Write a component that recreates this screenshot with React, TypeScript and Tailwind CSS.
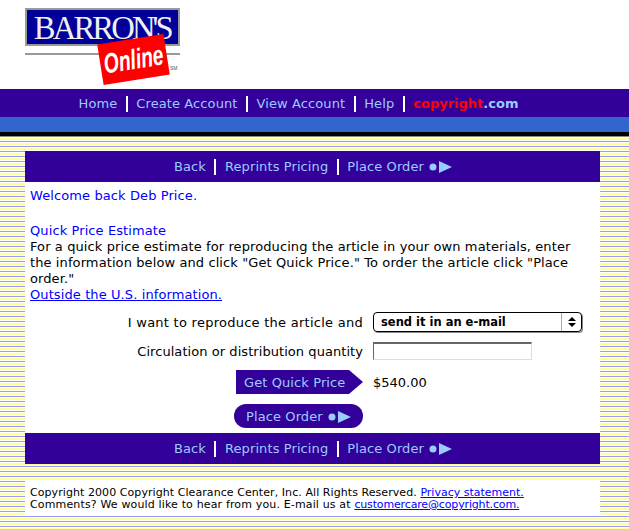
const font = "font-['DejaVu_Sans',Verdana,sans-serif]";
const navText = "text-[13px] font-medium tracking-[0.1px] text-[#99ccff]";

function Sep() {
  return <span className="mx-[8.5px] inline-block h-[16px] w-[2px] bg-white" />;
}

function Arrow() {
  return (
    <svg width="23" height="12" viewBox="0 0 23 12" className="ml-[5px]">
      <circle cx="4" cy="6" r="3.5" fill="#99ccff" />
      <path d="M10 0 L23 6 L10 12 Z" fill="#99ccff" />
    </svg>
  );
}

function SubNav() {
  return (
    <div className={`flex h-[31px] items-center justify-center bg-[#330099] pl-[1px] ${navText}`}>
      <span>Back</span>
      <Sep />
      <span>Reprints Pricing</span>
      <Sep />
      <span>Place Order</span>
      <Arrow />
    </div>
  );
}

function Logo() {
  return (
    <div className="relative h-[85px] w-[180px]">
      <div className="absolute left-[25px] top-[8px] flex h-[38px] w-[155px] items-center justify-center overflow-hidden border-2 border-[#999999] bg-[#000099]">
        <span className="inline-block origin-center scale-x-[0.96] pt-[2px] font-['Liberation_Serif',serif] text-[34px] leading-none tracking-[-3px] whitespace-nowrap text-[#f0f0f0]">
          BARRON'S
        </span>
      </div>
      <div className="absolute left-[25px] top-[53px] h-[2px] w-[155px] bg-[#999999]" />
      <div className="absolute left-[100px] top-[39px] flex h-[41px] w-[67px] -rotate-[9deg] items-center justify-center bg-[#ff0000]">
        <span className="inline-block scale-x-[0.69] font-['Liberation_Sans',sans-serif] text-[28px] font-bold italic leading-none whitespace-nowrap text-white">
          Online
        </span>
      </div>
      <span className="absolute left-[170px] top-[60px] font-['Liberation_Sans',sans-serif] text-[5px] text-[#555555]">SM</span>
    </div>
  );
}

export default function App() {
  return (
    <div className={`h-[529px] w-[629px] overflow-hidden bg-white ${font} text-[13px] leading-[16px] text-black`}>
      <div className="h-[89px] bg-white">
        <Logo />
      </div>
      <div className={`flex h-[28px] items-center justify-center bg-[#330099] pr-[32px] pt-[1px] ${navText}`}>
        <span>Home</span>
        <Sep />
        <span>Create Account</span>
        <Sep />
        <span>View Account</span>
        <Sep />
        <span>Help</span>
        <Sep />
        <span className="font-bold tracking-normal">
          <span className="text-[#ff0000]">copyright</span>.com
        </span>
      </div>
      <div className="h-[15px] bg-[#3366cc]" />
      <div className="h-[4px] bg-black" />
      <div className="h-[1px] bg-[#888888]" />

      <div className="h-[392px] bg-[linear-gradient(to_bottom,#ffffff_20%,#ffff99_20%,#ffff99_60%,#ffffff_60%,#ffffff_80%,#9999ff_80%)] bg-[length:100%_5px] px-[25px] pt-[14px]">
        <div className="h-[313px] w-[575px] bg-white">
          <SubNav />
          <div className="h-[251px]">
            <div className="px-[5px] pt-[6px] tracking-[0.1px]">
              <p className="text-[#0000ff]">Welcome back Deb Price.</p>
              <p className="mt-[19px] text-[#0000ff]">Quick Price Estimate</p>
              <p>
                For a quick price estimate for reproducing the article in your own materials, enter the information below and click "Get Quick Price." To order the article click "Place order."
              </p>
              <a className="text-[#0000ff] underline">Outside the U.S. information.</a>
            </div>
            <div className="mt-[9px] flex items-center">
              <span className="w-[338px] pt-[2px] text-right tracking-[0.26px]">I want to reproduce the article and</span>
              <div className="ml-[10px] flex h-[20px] w-[209px] items-center justify-between rounded-[4px] border border-black pl-[7px] text-[11.5px] font-bold shadow-[1px_1px_0_#888888]">
                send it in an e-mail
                <div className="flex h-full w-[20px] flex-col items-center justify-center gap-[2px] border-l border-[#aaaaaa]">
                  <div className="h-0 w-0 border-x-[4px] border-b-[4px] border-x-transparent border-b-black" />
                  <div className="h-0 w-0 border-x-[4px] border-t-[4px] border-x-transparent border-t-black" />
                </div>
              </div>
            </div>
            <div className="mt-[10px] flex items-center">
              <span className="w-[338px] pt-[2px] text-right tracking-[0.06px]">Circulation or distribution quantity</span>
              <div className="ml-[10px] h-[18px] w-[159px] border border-t-2 border-[#dddddd] border-l-[#666666] border-t-[#666666]" />
            </div>
            <div className="mt-[10px] flex items-center">
              <div className={`ml-[211px] flex h-[24px] w-[127px] items-center bg-[#330099] pl-[8px] pt-[1px] [clip-path:polygon(0_0,89%_0,100%_50%,89%_100%,0_100%)] ${navText}`}>
                Get Quick Price
              </div>
              <span className="ml-[10px] pt-[1px]">$540.00</span>
            </div>
            <div className={`ml-[209px] mt-[10px] flex h-[24px] w-[129px] items-center rounded-full bg-[#330099] pl-[12px] pt-[1px] ${navText}`}>
              Place Order
              <Arrow />
            </div>
          </div>
          <SubNav />
        </div>
        <div className="mt-[16px] h-[35px] w-[575px] bg-white px-[5px] pt-[7px] text-[11px] leading-[12px] text-black">
          <p className="tracking-[0.07px]">
            Copyright 2000 Copyright Clearance Center, Inc. All Rights Reserved.{" "}
            <a className="tracking-normal text-[#0000ff] underline">Privacy statement.</a>
          </p>
          <p className="tracking-[0.15px]">
            Comments? We would like to hear from you. E-mail us at{" "}
            <a className="tracking-[-0.15px] text-[#0000ff] underline">customercare@copyright.com.</a>
          </p>
        </div>
      </div>
    </div>
  );
}
